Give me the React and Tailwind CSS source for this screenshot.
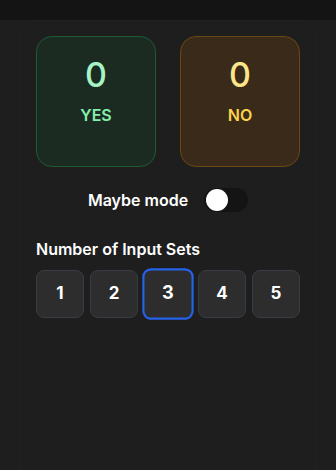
import React, { useState } from "react";

export default function App() {
  const [maybe, setMaybe] = useState(false);
  const [sets, setSets] = useState(3);
  return (
    <div className="w-[336px] h-[470px] bg-[#1e1e1e] flex flex-col" style={{ fontFamily: "Inter, 'Noto Sans', sans-serif" }}>
      <div className="h-[20px] bg-[#141414] shrink-0" />
      <div className="mx-[20px] flex-1 rounded-t-[16px] border border-b-0 border-white/[0.015] px-[15px] pt-[15px]">
        <div className="flex gap-[24px]">
          <div className="w-[120px] h-[131px] rounded-[16px] border border-[#1f5a35] bg-[#1b2b22] flex flex-col items-center pt-[18px]">
            <div className="text-[34px] leading-[40px] font-medium text-[#a7f3c4]">0</div>
            <div className="mt-[8px] text-[16px] leading-[24px] font-semibold text-[#86efac]">YES</div>
          </div>
          <div className="w-[120px] h-[131px] rounded-[16px] border border-[#6b4616] bg-[#3a2a1a] flex flex-col items-center pt-[18px]">
            <div className="text-[34px] leading-[40px] font-medium text-[#fde68a]">0</div>
            <div className="mt-[8px] text-[16px] leading-[24px] font-semibold text-[#fcd34d]">NO</div>
          </div>
        </div>
        <div className="mt-[21px] flex items-center justify-center gap-[16px]">
          <span className="text-[16px] leading-[24px] font-semibold text-white">Maybe mode</span>
          <button
            onClick={() => setMaybe(!maybe)}
            className={`w-[44px] h-[24px] rounded-full p-[2px] flex items-center ${maybe ? "bg-[#2563eb] justify-end" : "bg-[#141414] justify-start"}`}
          >
            <span className="w-[22px] h-[22px] rounded-full bg-white block" />
          </button>
        </div>
        <div className="mt-[25px] text-[16px] leading-[24px] font-semibold text-white">Number of Input Sets</div>
        <div className="mt-[9px] flex gap-[6px]">
          {[1, 2, 3, 4, 5].map((n) => (
            <button
              key={n}
              onClick={() => setSets(n)}
              className={`w-[48px] h-[48px] rounded-[8px] bg-[#2d2d2d] flex items-center justify-center text-[17px] font-bold text-white ${sets === n ? "border-2 border-[#2563eb] scale-[1.07]" : "border border-[#383d45]"}`}
            >
              {n}
            </button>
          ))}
        </div>
      </div>
    </div>
  );
}
